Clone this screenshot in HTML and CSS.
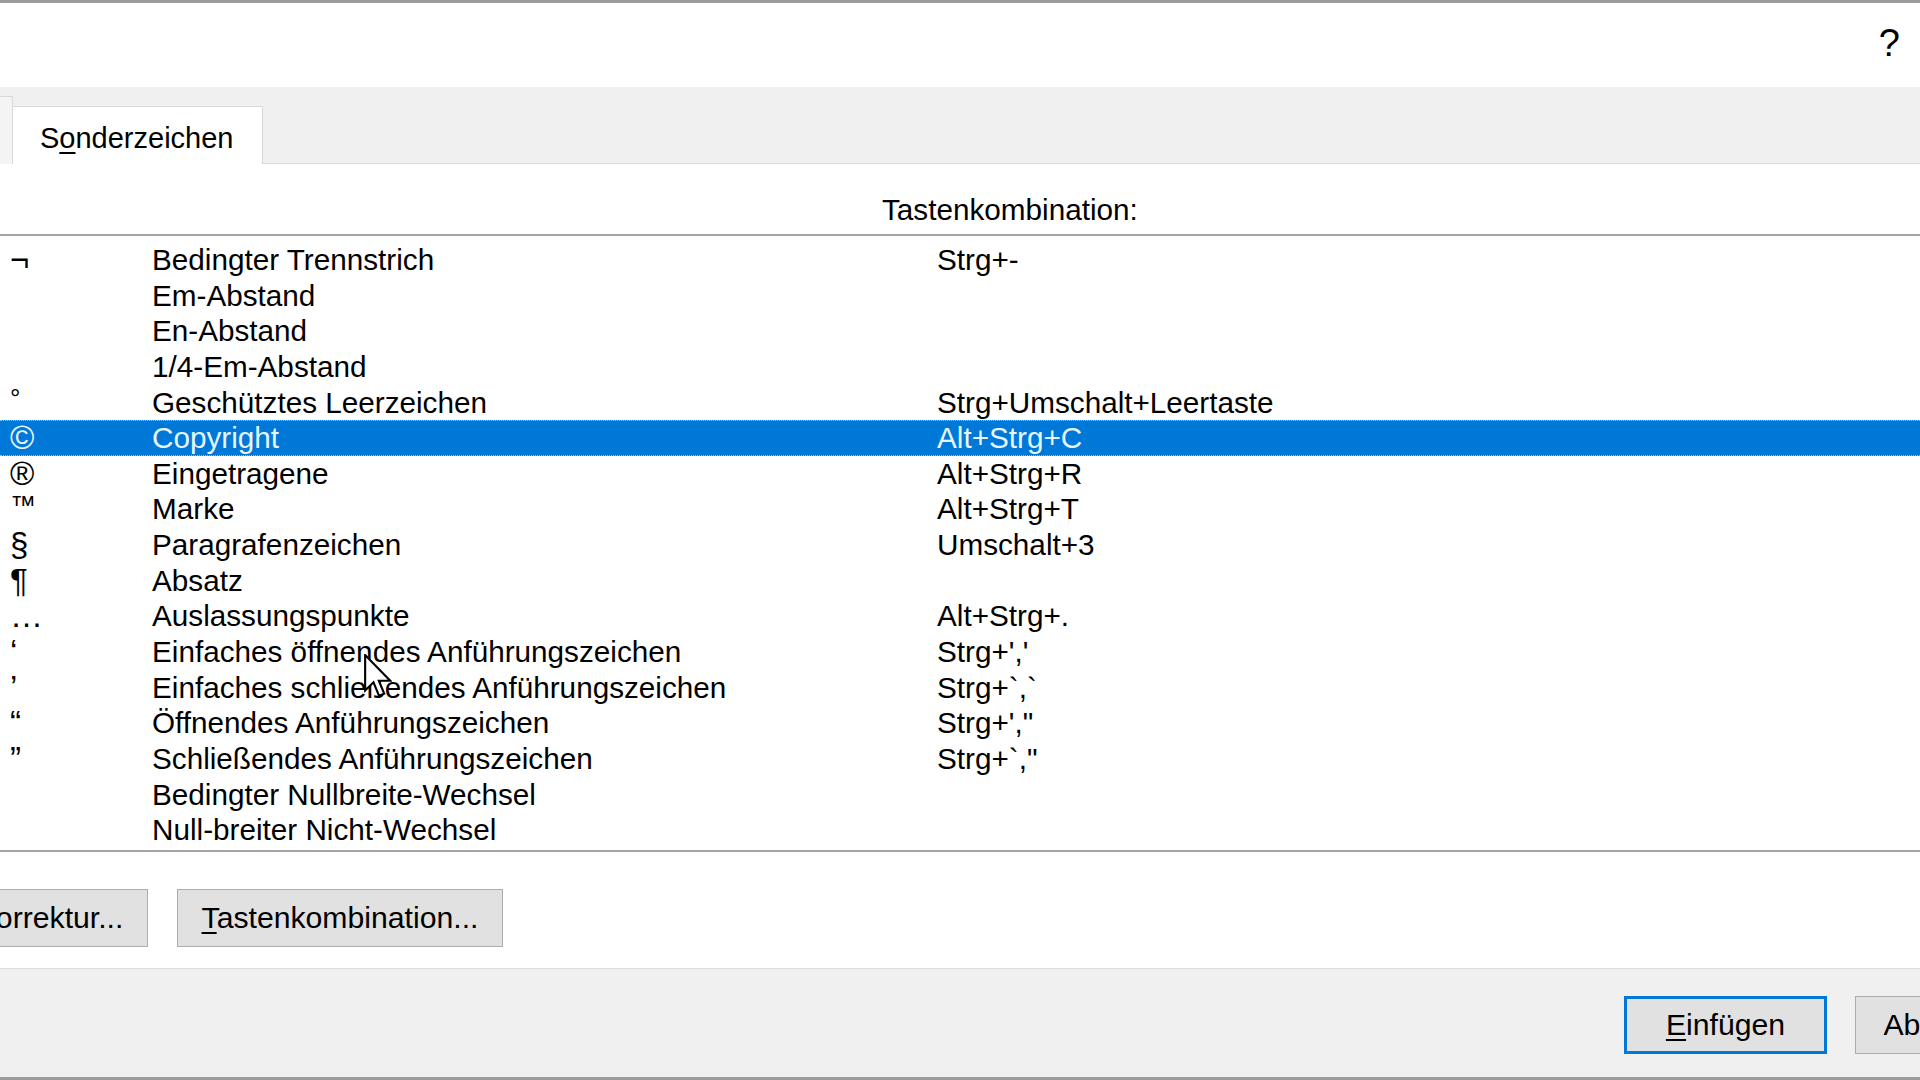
FILE: index.html
```html
<!DOCTYPE html>
<html lang="de">
<head>
<meta charset="utf-8">
<title>Symbol – Sonderzeichen</title>
<link rel="stylesheet" href="styles.css">
</head>
<body>
<div class="dialog">
  <header class="titlebar"><span class="help">?</span></header>
  <nav class="tabstrip">
    <div class="tab tab-prev"></div>
    <div class="tab tab-active">S<u>o</u>nderzeichen</div>
  </nav>
  <main class="content">
    <div class="list-head"><span class="head-shortcut">Tastenkombination:</span></div>
    <div class="list">
      <div class="row"><span class="sym">¬</span><span>Bedingter Trennstrich</span><span>Strg+-</span></div>
      <div class="row"><span class="sym"></span><span>Em-Abstand</span><span></span></div>
      <div class="row"><span class="sym"></span><span>En-Abstand</span><span></span></div>
      <div class="row"><span class="sym"></span><span>1/4-Em-Abstand</span><span></span></div>
      <div class="row"><span class="sym sym-top">°</span><span>Geschütztes Leerzeichen</span><span>Strg+Umschalt+Leertaste</span></div>
      <div class="row row-selected"><span class="sym">©</span><span>Copyright</span><span>Alt+Strg+C</span></div>
      <div class="row"><span class="sym">®</span><span>Eingetragene</span><span>Alt+Strg+R</span></div>
      <div class="row"><span class="sym sym-tm">™</span><span>Marke</span><span>Alt+Strg+T</span></div>
      <div class="row"><span class="sym">§</span><span>Paragrafenzeichen</span><span>Umschalt+3</span></div>
      <div class="row"><span class="sym">¶</span><span>Absatz</span><span></span></div>
      <div class="row"><span class="sym">…</span><span>Auslassungspunkte</span><span>Alt+Strg+.</span></div>
      <div class="row"><span class="sym">‘</span><span>Einfaches öffnendes Anführungszeichen</span><span>Strg+','</span></div>
      <div class="row"><span class="sym">’</span><span>Einfaches schließendes Anführungszeichen</span><span>Strg+`,`</span></div>
      <div class="row"><span class="sym">“</span><span>Öffnendes Anführungszeichen</span><span>Strg+',"</span></div>
      <div class="row"><span class="sym">”</span><span>Schließendes Anführungszeichen</span><span>Strg+`,"</span></div>
      <div class="row"><span class="sym"></span><span>Bedingter Nullbreite-Wechsel</span><span></span></div>
      <div class="row"><span class="sym"></span><span>Null-breiter Nicht-Wechsel</span><span></span></div>
    </div>
    <div class="actions">
      <button class="btn btn-auto">AutoKorrektur...</button>
      <button class="btn btn-keys"><u>T</u>astenkombination...</button>
    </div>
  </main>
  <footer class="footer">
    <button class="btn btn-default"><u>E</u>infügen</button>
    <button class="btn btn-cancel">Abbrechen</button>
  </footer>
  <svg class="cursor" viewBox="0 0 13 21" width="28" height="45">
    <path d="M0.5 0.5 L0.5 17 L4.4 13.2 L7 19.5 L9.4 18.5 L6.9 12.5 L12.2 12.5 Z" fill="#ffffff" stroke="#000000" stroke-width="1" stroke-linejoin="miter"/>
  </svg>
</div>
</body>
</html>
```

FILE: styles.css
```css
* {
  box-sizing: border-box;
}

html, body {
  margin: 0;
  padding: 0;
}

body {
  width: 1920px;
  height: 1080px;
  overflow: hidden;
  background: #ffffff;
  font-family: "Liberation Sans", Arial, sans-serif;
  font-size: 29.7px;
  color: #000000;
}

.dialog {
  position: relative;
  width: 1920px;
  height: 1080px;
  display: flex;
  flex-direction: column;
  border-top: 3px solid #9b9b9b;
  border-bottom: 3px solid #9b9b9b;
  overflow: hidden;
}

.titlebar {
  height: 84px;
  flex: none;
  background: #ffffff;
  display: flex;
  justify-content: flex-end;
  align-items: flex-start;
  padding: 18px 20px 0 0;
}

.help {
  font-size: 38px;
  line-height: 44px;
}

.tabstrip {
  height: 77px;
  flex: none;
  background: #f0f0f0;
  border-bottom: 1px solid #d9d9d9;
  display: flex;
  align-items: flex-end;
}

.tab {
  border: 1px solid #d9d9d9;
  border-bottom: none;
}

.tab-prev {
  width: 13px;
  height: 68px;
  margin-bottom: -1px;
  background: #f4f4f4;
  border-left: none;
}

.tab-active {
  width: 250px;
  height: 58px;
  margin-bottom: -1px;
  background: #ffffff;
  padding: 15px 0 0 27px;
  line-height: 33px;
  font-size: 29px;
  border-left: none;
}

.tab-active u,
.btn u {
  text-decoration-thickness: 2px;
  text-underline-offset: 4px;
}

.content {
  flex: 1;
  background: #ffffff;
  display: flex;
  flex-direction: column;
}

.list-head {
  height: 70px;
  flex: none;
  padding: 28px 0 0 882px;
  line-height: 35px;
}

.list {
  flex: none;
  border-top: 2px solid #a3a3a3;
  border-bottom: 2px solid #a3a3a3;
  padding: 6px 0 2px;
}

.row {
  display: grid;
  grid-template-columns: 142px 785px 1fr;
  height: 35.65px;
  line-height: 35.65px;
  padding-left: 10px;
  white-space: nowrap;
}

.sym {
  font-size: 33px;
}

.sym-top {
  font-size: 26px;
  line-height: 26px;
}

.sym-tm {
  font-size: 26px;
  line-height: 28px;
}

.row-selected {
  background: #0078d7;
  color: #e6f6ff;
  border-top: 1px dotted #8cc4ef;
  border-bottom: 1px dotted #8cc4ef;
  line-height: 33.65px;
}

.actions {
  display: flex;
  margin-top: 37px;
}

.btn {
  height: 58px;
  background: #e1e1e1;
  border: 1px solid #adadad;
  font-family: "Liberation Sans", Arial, sans-serif;
  font-size: 30.2px;
  color: #000000;
  padding: 0;
  flex: none;
  text-align: center;
  white-space: nowrap;
}

.btn-auto {
  width: 259px;
  margin-left: -111px;
}

.btn-keys {
  width: 326px;
  margin-left: 29px;
}

.footer {
  height: 109px;
  flex: none;
  background: #f0f0f0;
  border-top: 1px solid #dcdcdc;
  display: flex;
  justify-content: flex-end;
  align-items: flex-start;
  gap: 28px;
  padding-top: 27px;
}

.btn-default {
  width: 203px;
  border: 3px solid #0078d7;
}

.btn-cancel {
  width: 203px;
  margin-right: -138px;
}

.cursor {
  position: absolute;
  left: 364px;
  top: 651px;
}
```
